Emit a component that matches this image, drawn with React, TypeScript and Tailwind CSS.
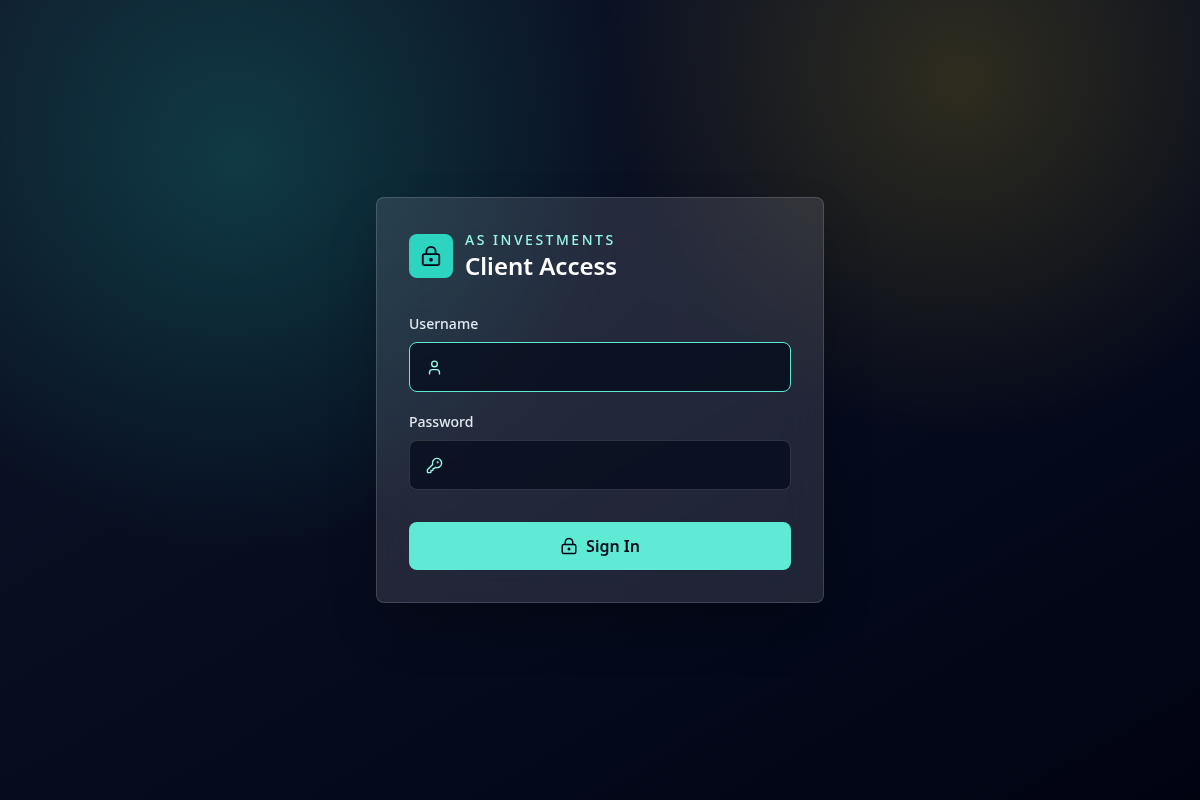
import React, { useState } from "react";
import { KeyRound, LockKeyhole, User } from "lucide-react";
import type { LucideIcon } from "lucide-react";

interface FieldProps {
  label: string;
  name: string;
  type?: string;
  value: string;
  icon: LucideIcon;
  autoFocus?: boolean;
  autoComplete?: string;
  onChange: (e: React.ChangeEvent<HTMLInputElement>) => void;
}

const Field: React.FC<FieldProps> = ({ label, name, icon: Icon, type = "text", ...rest }) => (
  <div>
    <label htmlFor={name} className="block text-sm font-medium text-[#e2e8f0]">
      {label}
    </label>
    <div className="mt-2 flex items-center gap-3 rounded-lg border border-white/15 bg-[#030a1a]/70 px-4 focus-within:border-[#5eead4]">
      <Icon size={17} className="shrink-0 text-[#99f6e4]" />
      <input
        id={name}
        name={name}
        type={type}
        className="h-12 w-full min-w-0 bg-transparent text-base text-white outline-none"
        {...rest}
      />
    </div>
  </div>
);

const App: React.FC = () => {
  const [formData, setFormData] = useState({ username: "", password: "" });

  const handleSubmit = (e: React.FormEvent) => {
    e.preventDefault();
  };

  return (
    <main className="flex min-h-screen items-center justify-center bg-[radial-gradient(circle_at_20%_20%,rgba(28,192,172,0.23),transparent_34%),radial-gradient(circle_at_80%_10%,rgba(250,204,21,0.16),transparent_30%),linear-gradient(150deg,#0f172a_0%,#0a1023_30%,#03081a_75%,#010311_100%)] px-4 py-10 font-['Noto_Sans',sans-serif] text-white">
      <section className="w-full max-w-md rounded-lg border border-white/15 bg-[#f1f5ff]/[0.12] p-8 shadow-2xl shadow-black/35 backdrop-blur-xl">
        {/* Brand */}
        <div className="mb-8 flex items-center gap-3">
          <div className="flex size-11 items-center justify-center rounded-lg bg-[#2dd4bf] text-[#020617]">
            <LockKeyhole size={22} />
          </div>
          <div>
            <p className="text-sm font-medium tracking-[0.18em] text-[#99f6e4]">AS INVESTMENTS</p>
            <h1 className="text-2xl font-semibold">Client Access</h1>
          </div>
        </div>

        <form onSubmit={handleSubmit}>
          <div className="grid gap-5">
            <Field
              label="Username"
              name="username"
              icon={User}
              value={formData.username}
              autoFocus
              autoComplete="username"
              onChange={(e) => setFormData({ ...formData, username: e.target.value })}
            />
            <Field
              label="Password"
              name="password"
              type="password"
              icon={KeyRound}
              value={formData.password}
              autoComplete="current-password"
              onChange={(e) => setFormData({ ...formData, password: e.target.value })}
            />
          </div>

          <button
            type="submit"
            className="mt-8 flex w-full items-center justify-center gap-2 rounded-lg bg-[#5eead4] px-4 py-3 font-semibold text-[#020617] hover:bg-[#99f6e4]"
          >
            <LockKeyhole size={18} />
            Sign In
          </button>
        </form>
      </section>
    </main>
  );
};

export default App;
